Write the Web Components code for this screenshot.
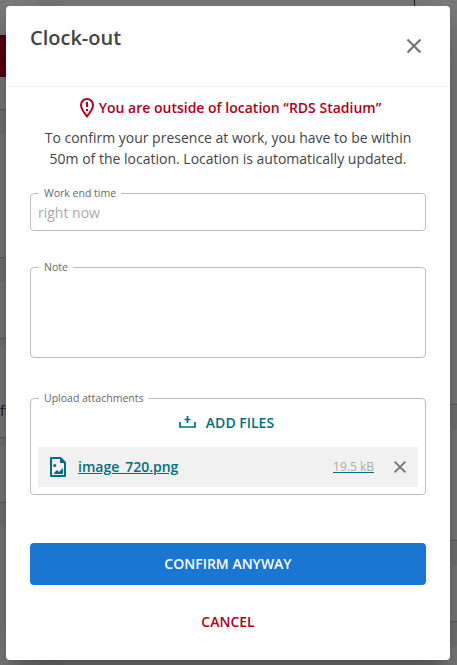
<!DOCTYPE html>
<html lang="en">
<head>
<meta charset="utf-8">
<title>Clock-out</title>
<style>
  html, body {
    margin: 0;
    height: 100%;
    overflow: hidden;
  }
  body {
    display: flow-root;
    font-family: "Open Sans", "Noto Sans", sans-serif;
    font-size: 14px;
    line-height: 21px;
    color: #444;
    background: #787878;
  }
</style>
</head>
<body>
<page-behind></page-behind>
<modal-dialog>
  <span slot="title">Clock-out</span>
  <location-warning>
    You are outside of location “RDS Stadium”
    <span slot="hint">To confirm your presence at work, you have to be within 50m of the location. Location is automatically updated.</span>
  </location-warning>
  <outlined-field label="Work end time" style="--height: 38px">right now</outlined-field>
  <outlined-field label="Note" style="--height: 91px"></outlined-field>
  <outlined-field label="Upload attachments" style="--height: 97px; --gap: 40px">
    <file-list>
      <attached-file name="image_720.png" size="19.5 kB"></attached-file>
    </file-list>
  </outlined-field>
  <action-button slot="actions" variant="primary">Confirm anyway</action-button>
  <action-button slot="actions">Cancel</action-button>
</modal-dialog>

<script>
const ICONS = {
  close: '<path d="M5.500 5.500l13 13M18.500 5.500l-13 13" fill="none" stroke="currentColor" stroke-width="2.200"/>',
  pin: '<path d="M7 1C3.700 1 1 3.600 1 7c0 4.200 6 11.400 6 11.400s6-7.200 6-11.400c0-3.400-2.700-6-6-6z" fill="none" stroke="currentColor" stroke-width="2"/><path d="M6 4h2v5H6zM6 11h2v2H6z" fill="currentColor"/>',
  upload: '<path d="M1 6v5h15V6M8.500 0v7M5.500 3.500h6" fill="none" stroke="currentColor" stroke-width="1.700"/>',
  image: '<path d="M1 1h9.500L15 5.500V19H1z" fill="none" stroke="currentColor" stroke-width="2" stroke-linejoin="round"/><path d="M10 1v5h5zM4 17v-1l3-3 2 2 4-4v6z" fill="currentColor"/><circle cx="4.700" cy="8.500" r="1.500" fill="currentColor"/>'
};

function icon(name, width, height, box) {
  return `<svg width="${width}" height="${height}" viewBox="${box}">${ICONS[name]}</svg>`;
}

// Dimmed page that shows around the dialog
class PageBehind extends HTMLElement {
  constructor() {
    super();
    this.attachShadow({ mode: 'open' });
    this.shadowRoot.innerHTML = `
      <style>
        :host {
          position: absolute;
          inset: 0;
          display: flex;
          overflow: hidden;
        }
        .left { flex: none; width: 39px; }
        .center { flex: none; width: 352px; margin-left: 24px; background: #7c7c7c; }
        .divider { height: 60px; border-right: 1px solid #1c1c1c; }
        .right { flex: none; width: 42px; }
        i { display: block; box-sizing: border-box; background: #7d7d7d; border-bottom: 1px solid #606060; }
        .gap { background: #767676; border: 0; }
        .red { background: #5b0010; border: 0; }
        .text { font-style: normal; font-size: 14px; line-height: 128px; color: #222; }
      </style>
      <div class="left">
        <i style="height: 35px; border: 0"></i><i class="red" style="height: 42px"></i>
        <i style="height: 33px"></i><i class="gap" style="height: 24px"></i>
        <i style="height: 124px"></i><i class="gap" style="height: 24px"></i>
        <i style="height: 57px"></i><i class="gap" style="height: 8px"></i>
        <i class="text" style="height: 91px">ft</i><i class="gap" style="height: 8px"></i>
        <i style="height: 57px"></i><i class="gap" style="height: 24px"></i>
        <i style="height: 138px; border: 0"></i>
      </div>
      <div class="center"><div class="divider"></div></div>
      <div class="right">
        <i style="height: 405px"></i><i class="gap" style="height: 24px"></i>
        <i style="height: 112px"></i><i class="gap" style="height: 24px"></i>
        <i style="height: 57px"></i><i class="gap" style="height: 24px"></i>
        <i style="height: 19px; border: 0"></i>
      </div>
    `;
  }
}

class ModalDialog extends HTMLElement {
  constructor() {
    super();
    this.attachShadow({ mode: 'open' });
    this.shadowRoot.innerHTML = `
      <style>
        :host {
          position: relative;
          display: block;
          box-sizing: border-box;
          width: 444px;
          height: 654px;
          margin: 6px;
          background: #fff;
          border-radius: 4px;
          box-shadow:
            0 11px 15px -7px rgba(0, 0, 0, 0.2),
            0 24px 38px 3px rgba(0, 0, 0, 0.14),
            0 9px 46px 8px rgba(0, 0, 0, 0.12);
        }
        header {
          display: flex;
          justify-content: space-between;
          box-sizing: border-box;
          height: 81px;
          padding: 17px 24px 0;
          border-bottom: 1px solid #eee;
        }
        h1 {
          margin: 0;
          font-size: 20px;
          font-weight: 600;
          line-height: 30px;
        }
        button {
          width: 24px;
          height: 24px;
          margin-top: 11px;
          padding: 0;
          border: 0;
          background: none;
          color: #757575;
        }
        .body { padding: 10px 24px 0; }
        footer { padding: 48px 24px 0; }
      </style>
      <header>
        <h1><slot name="title"></slot></h1>
        <button aria-label="Close">${icon('close', 24, 24, '0 0 24 24')}</button>
      </header>
      <div class="body"><slot></slot></div>
      <footer><slot name="actions"></slot></footer>
    `;
  }
}

class LocationWarning extends HTMLElement {
  constructor() {
    super();
    this.attachShadow({ mode: 'open' });
    this.shadowRoot.innerHTML = `
      <style>
        :host { display: block; text-align: center; }
        .title {
          display: flex;
          align-items: center;
          justify-content: center;
          gap: 5px;
          height: 21px;
          padding-left: 5px;
          color: #b00020;
          font-weight: 600;
        }
        p { margin: 9px 8px 24px; }
      </style>
      <div class="title">${icon('pin', 14, 20, '0 0 14 20')}<span><slot></slot></span></div>
      <p><slot name="hint"></slot></p>
    `;
  }
}

class OutlinedField extends HTMLElement {
  constructor() {
    super();
    this.attachShadow({ mode: 'open' });
    this.shadowRoot.innerHTML = `
      <style>
        :host { display: block; margin-top: var(--gap, 36px); color: #aaa; }
        :host(:first-of-type) { margin-top: 0; }
        .box {
          position: relative;
          box-sizing: border-box;
          height: var(--height);
          padding: 8px 7px 0;
          border: 1px solid #bdbdbd;
          border-radius: 4px;
        }
        label {
          position: absolute;
          top: -9px;
          left: 8px;
          padding: 0 5px;
          background: #fff;
          color: #666;
          font-size: 10.5px;
          line-height: 16px;
        }
      </style>
      <div class="box"><label></label><slot></slot></div>
    `;
  }

  connectedCallback() {
    this.shadowRoot.querySelector('label').textContent = this.getAttribute('label');
  }
}

class FileList extends HTMLElement {
  constructor() {
    super();
    this.attachShadow({ mode: 'open' });
    this.shadowRoot.innerHTML = `
      <style>
        :host { display: block; }
        .add {
          display: flex;
          align-items: center;
          justify-content: center;
          gap: 10px;
          height: 30px;
          margin-bottom: 10px;
          padding-right: 3px;
          color: #006f80;
          font-weight: 600;
          text-transform: uppercase;
        }
      </style>
      <div class="add">${icon('upload', 17, 12, '0 0 17 12')}<span>Add files</span></div>
      <slot></slot>
    `;
  }
}

class AttachedFile extends HTMLElement {
  constructor() {
    super();
    this.attachShadow({ mode: 'open' });
    this.shadowRoot.innerHTML = `
      <style>
        :host {
          display: flex;
          align-items: center;
          box-sizing: border-box;
          height: 40px;
          padding: 0 8px 0 12px;
          background: #f1f1f1;
          color: #006f80;
        }
        a { padding-bottom: 2px; color: inherit; text-decoration: underline; }
        .name { flex: 1; margin-left: 12px; font-weight: 600; }
        .size { font-size: 12px; text-decoration-color: #006f80; color: #aaa; }
        .remove { margin-left: 16px; color: #757575; height: 20px; }
        svg { display: block; }
      </style>
      ${icon('image', 16, 20, '0 0 16 20')}
      <a class="name"></a>
      <a class="size"></a>
      <span class="remove">${icon('close', 20, 20, '0 0 24 24')}</span>
    `;
  }

  connectedCallback() {
    this.shadowRoot.querySelector('.name').textContent = this.getAttribute('name');
    this.shadowRoot.querySelector('.size').textContent = this.getAttribute('size');
  }
}

class ActionButton extends HTMLElement {
  constructor() {
    super();
    this.attachShadow({ mode: 'open' });
    this.shadowRoot.innerHTML = `
      <style>
        :host { display: block; margin-bottom: 16px; }
        button {
          display: block;
          width: 100%;
          height: 42px;
          padding: 0 0 2px;
          border: 0;
          border-radius: 4px;
          background: none;
          color: #b00020;
          font: inherit;
          font-weight: 600;
          text-transform: uppercase;
        }
        :host([variant="primary"]) button { background: #1976d2; color: #fff; }
      </style>
      <button><slot></slot></button>
    `;
  }
}

customElements.define('page-behind', PageBehind);
customElements.define('modal-dialog', ModalDialog);
customElements.define('location-warning', LocationWarning);
customElements.define('outlined-field', OutlinedField);
customElements.define('file-list', FileList);
customElements.define('attached-file', AttachedFile);
customElements.define('action-button', ActionButton);
</script>
</body>
</html>
